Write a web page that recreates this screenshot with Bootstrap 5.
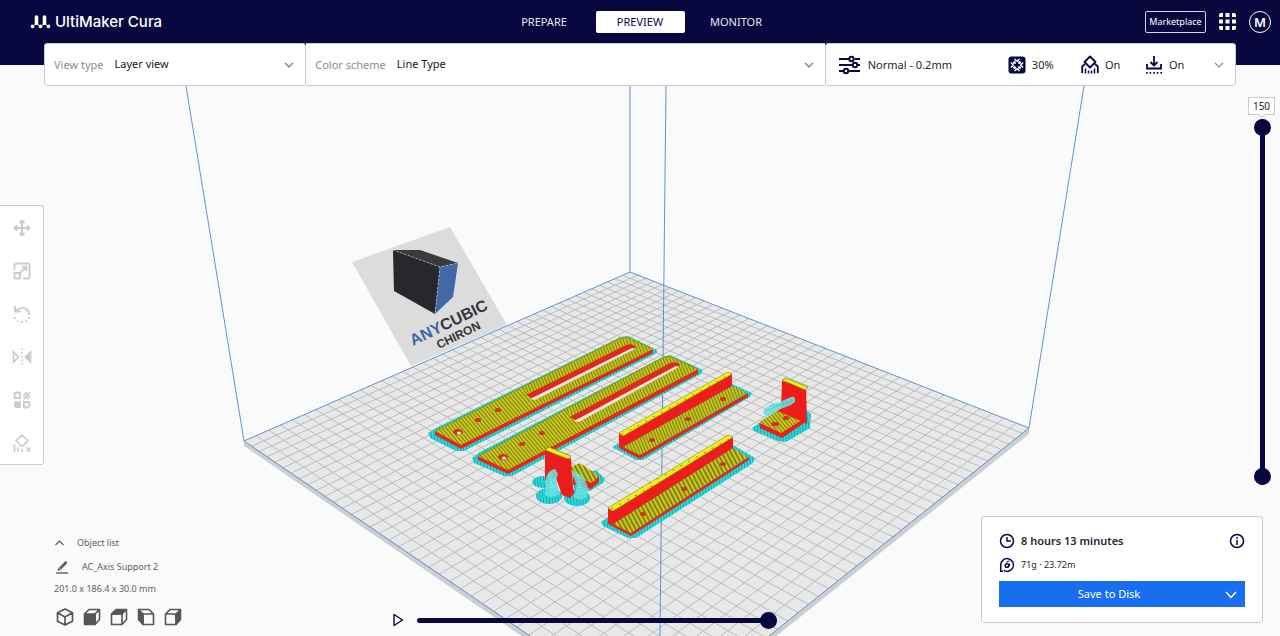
<!DOCTYPE html>
<html lang="en">
<head>
<meta charset="utf-8">
<meta name="viewport" content="width=device-width, initial-scale=1">
<title>UltiMaker Cura</title>
<link href="https://cdn.jsdelivr.net/npm/bootstrap@5.3.0/dist/css/bootstrap.min.css" rel="stylesheet">
<style>
  :root { --navy: #08073f; --edge: #c9cacc; --muted-ink: #8a8b90; --action: #196ef0; }
  body { font-family: "Noto Sans", "Open Sans", sans-serif; font-size: 11px; line-height: 16px; color: #26262e; background: #fafafa; }
  button { font-family: inherit; }
  .scene { inset: 0; z-index: 0; }
  .layer { z-index: 1; }
  .topbar { background: var(--navy); height: 65px; }
  .topbar-row { height: 43px; }
  .side { flex: 1 1 0; }
  .brand { margin-left: 30px; padding-top: 2px; gap: 4px; color: #fff; font: 500 15px/20px Inter, sans-serif; text-decoration: none; }
  .stage-tabs { gap: 7px; }
  .stage-tabs .nav-link { width: 89px; height: 22px; padding: 0; border-radius: 2px; color: #e6e6f2; font-size: 11px; line-height: 22px; text-align: center; }
  .stage-tabs .nav-link.active { background: #fff; color: var(--navy); }
  .tools-end { gap: 13px; }
  .tools-end > :last-child { margin-right: 9px; }
  .market { height: 22px; width: 61px; padding: 0; border: 1px solid #d5d5e6; border-radius: 2px; color: #fff; font-size: 9px; line-height: 20px; }
  .plain { background: none; border: 0; padding: 0; color: inherit; }
  .avatar { width: 22px; height: 22px; border: 1px solid #fff; border-radius: 50%; color: #fff; font-size: 13px; font-weight: 600; line-height: 20px; }
  .setup { margin: -22px 44px 0; }
  .panel { background: #fff; border: 1px solid var(--edge); border-radius: 3px; }
  .setup .panel { height: 43px; }
  .seg-view { width: 22%; }
  .seg-scheme { width: 43.5%; border-left: 0 !important; border-right: 0 !important; }
  .seg-print { flex: 1 1 0; }
  .seg-view, .seg-scheme { padding-left: 9px; }
  .seg-view label, .seg-scheme label { color: var(--muted-ink); white-space: nowrap; }
  .pick { border: 0; background-color: transparent; font-size: 11px; height: 41px; padding: 0 30px 0 11px; color: #14141e;
    background-position: right 11px center; background-size: 10px 10px;
    background-image: url("data:image/svg+xml,%3Csvg xmlns='http://www.w3.org/2000/svg' viewBox='0 0 10 10'%3E%3Cpath d='M1 3l4 4 4-4' fill='none' stroke='%23777' stroke-width='1.1'/%3E%3C/svg%3E"); }
  .seg-print { padding: 0 11px 0 12px; color: #26262e; text-align: left; }
  .seg-print svg { color: var(--navy); }
  .seg-print .chev { color: #888; }
  .w-profile { flex: 170 1 0; gap: 7px; }
  .w-infill { flex: 73 1 0; gap: 6px; }
  .w-support { flex: 64 1 0; gap: 6px; }
  .w-adhesion { flex: 69 1 0; gap: 6px; }
  .toolbox { width: 44px; margin-top: 119px; border-left: 0; border-radius: 0 3px 3px 0; color: #cbccd0; }
  .toolbox button { height: 43px; }
  .layers { margin: 11px 5px 0 0; }
  .layer-no { width: 27px; height: 18px; border: 1px solid var(--edge); background: #fff; font-size: 10px; line-height: 16px; text-align: center; }
  .layer-no::after { content: ""; display: block; width: 5px; height: 5px; margin: -2px auto 0; background: #fff; border: solid var(--edge); border-width: 0 1px 1px 0; transform: rotate(45deg); }
  .layer-track { width: 18px; height: 366px; margin-top: 4px; }
  .knob { appearance: none; -webkit-appearance: none; background: none; height: 18px; margin: 0; }
  .knob::-webkit-slider-runnable-track { height: 5px; border-radius: 3px; background: var(--navy); }
  .knob::-webkit-slider-thumb { -webkit-appearance: none; width: 17px; height: 17px; margin-top: -6px; border-radius: 50%; background: var(--navy); }
  .layer-track .knob { position: absolute; left: 0; top: 0; width: 366px; transform-origin: 0 0; transform: rotate(-90deg) translateX(-100%); }
  .layer-track .low { pointer-events: none; }
  .layer-track .low::-webkit-slider-runnable-track { background: none; }
  .layer-track .low::-webkit-slider-thumb { pointer-events: auto; }
  .objects { width: 187px; padding: 0 0 10px 54px; font-size: 9px; color: #5c5d61; }
  .objects .line-a, .objects .line-b { gap: 12px; height: 24px; }
  .objects .line-c { line-height: 20px; }
  .views { gap: 9px; margin: 9px 0 0 2px; color: #55565a; }
  .playback { width: 385px; gap: 12px; padding-bottom: 7px; color: var(--navy); }
  .result { width: 282px; margin: 0 17px 13px 0; padding: 12px 17px 15px; font-size: 9px; }
  .result .entry { height: 24px; gap: 6px; }
  .result svg { color: var(--navy); }
  .result .time { font-size: 11px; }
  .save-row { margin-top: 4px; }
  .save-row .btn { --bs-btn-bg: var(--action); --bs-btn-border-width: 0; --bs-btn-border-radius: 0; height: 26px; padding: 0; font-size: 11px; color: #fff; }
  .save-row .main-action { padding-left: 2px; }
  .save-row .more { width: 28px; flex: none; }
  .save-row .more svg { color: #fff; }
</style>
</head>
<body>
<div class="position-relative min-vh-100 d-flex flex-column overflow-hidden">

  <svg class="scene position-absolute w-100 h-100" viewBox="0 0 1280 636" preserveAspectRatio="xMidYMin slice" role="img" aria-label="Build plate with sliced models">
    <defs>
      <pattern id="skin" width="3" height="3" patternUnits="userSpaceOnUse" patternTransform="rotate(-40)"><rect width="3" height="3" fill="#cdca1c"/><rect width="1.100" height="3" fill="#7d8114"/></pattern>
      <pattern id="skinBack" width="3" height="3" patternUnits="userSpaceOnUse" patternTransform="rotate(-22)"><rect width="3" height="3" fill="#c6c71c"/><rect width="1.100" height="3" fill="#7d8212"/></pattern>
      <pattern id="skinWide" width="4" height="4" patternUnits="userSpaceOnUse" patternTransform="rotate(-28)"><rect width="4" height="4" fill="#cfc81c"/><rect width="1.600" height="4" fill="#707512"/></pattern>
      <pattern id="brim" width="3" height="4" patternUnits="userSpaceOnUse" patternTransform="rotate(-8)"><rect width="3" height="4" fill="#25dcdc"/><rect width="1" height="4" fill="#1ba5aa"/></pattern>
      <pattern id="ridge" width="9" height="4" patternUnits="userSpaceOnUse" patternTransform="rotate(-29)"><rect width="9" height="4" fill="#eef01c"/><rect width="2" height="1" y="1" fill="#8a8e12"/></pattern>
    </defs>
    <path d="M352 262L450 227 507 325 411 366z" fill="#dcdcdc"/>
    <path d="M393 250L440 267 435 314 394 291z" fill="#2a262d"/>
    <path d="M393 250L420 250 458 263 440 267z" fill="#3b3a3d"/>
    <path d="M440 267L458 263 453 297 435 314z" fill="#4268a8"/>
    <path d="M393 250L440 267 458 263M440 267L435 314" fill="none" stroke="#ddd" stroke-width=".6" stroke-dasharray="2 2"/>
    <g font-family="Liberation Sans, sans-serif" font-weight="700">
      <text transform="translate(413 346) rotate(-26)" font-size="16" fill="#37363a"><tspan fill="#3f65a2">ANY</tspan>CUBIC</text>
      <text transform="translate(439 349) rotate(-26)" font-size="12" fill="#37363a">CHIRON</text>
    </g>
    <path d="M244 441V446L659 730 1029 434V428L660 700z" fill="#cdced4"/>
    <path d="M630 272L1029 428 659.500 724 244 441z" fill="#e8e8e8"/>
    <path id="grid" fill="none" stroke="#bcbcbe"/>
    <path d="M186 86L244 441M630 86V272M666 86L660 636M1084 86L1029 428M630 272L1029 428 659 724 244 441z" fill="none" stroke="#5387cb" stroke-width=".9"/>

    <!-- long slotted arms -->
    <g>
      <path d="M428 433L436 428 621 337 628 336 657 350 657 353 464 451 456 451 430 438z" fill="url(#brim)"/>
      <path d="M435 431L461 444 653 348V353L461 449 435 435z" fill="#e0281c"/>
      <path d="M435 431L620 338 627 337 653 349 461 445z" fill="url(#skin)"/>
      <path d="M520 388L620 338 627 337 653 349 545 403z" fill="url(#skinBack)"/>
      <path d="M435 431L620 338 627 337 653 349" fill="none" stroke="#7c9a1c"/>
      <path d="M526 395L626 345Q633 343 636 347L534 399z" fill="#e0281c"/>
      <path d="M530 399L632 348 635 349 535 400z" fill="#f3e6e2"/>
      <g fill="#d8301c"><ellipse cx="458" cy="432" rx="5" ry="3"/><ellipse cx="478" cy="420" rx="3" ry="2"/><ellipse cx="498" cy="410" rx="3" ry="2"/></g>
      <ellipse cx="459" cy="433" rx="2" ry="1.500" fill="#eee"/>
    </g>
    <g>
      <path d="M472 458L480 452 663 357 670 355 703 370 701 374 512 476 504 476 474 463z" fill="url(#brim)"/>
      <path d="M478 456L508 469 698 369V374L508 474 478 460z" fill="#e0281c"/>
      <path d="M478 456L662 358 669 356 698 369 508 470z" fill="url(#skin)"/>
      <path d="M563 410L662 358 669 356 698 369 592 425z" fill="url(#skinBack)"/>
      <path d="M478 456L662 358 669 356 698 369" fill="none" stroke="#7c9a1c"/>
      <path d="M570 417L670 363Q678 361 680 365L577 421z" fill="#e0281c"/>
      <path d="M574 421L676 366 679 367 579 422z" fill="#f3e6e2"/>
      <g fill="#d8301c"><ellipse cx="503" cy="457" rx="5" ry="3"/><ellipse cx="522" cy="444" rx="3" ry="2"/><ellipse cx="542" cy="433" rx="3" ry="2"/></g>
      <ellipse cx="504" cy="458" rx="2" ry="1.500" fill="#eee"/>
    </g>

    <!-- angle brackets -->
    <path d="M612 447L619 443 732 384 752 393 750 397 643 460 636 460z" fill="url(#brim)"/>
    <path d="M619 444L640 455 748 393V397L640 459 619 448z" fill="#e0281c"/>
    <path d="M623 447L732 386 747 393 640 455z" fill="url(#skinBack)"/>
    <path d="M619 433L732 374V386L623 447 619 445z" fill="#ee1c1a"/>
    <path d="M619 433L728 372 732 374 623 436z" fill="url(#ridge)" stroke="#94a416" stroke-width=".7"/>
    <g fill="#d0301c"><ellipse cx="652" cy="440" rx="3" ry="2"/><ellipse cx="688" cy="419" rx="3" ry="2"/><ellipse cx="723" cy="399" rx="3" ry="2"/></g>

    <path d="M601 522L608 517 733 445 755 458 753 463 636 538 628 538 603 526z" fill="url(#brim)"/>
    <path d="M608 519L631 532 749 457V460L631 536 608 524z" fill="#e0281c"/>
    <path d="M613 524L733 448 748 457 631 533z" fill="url(#skinWide)"/>
    <path d="M608 508L733 437V448L613 524 608 521z" fill="#ee1c1a"/>
    <path d="M608 508L728 435 733 437 613 511z" fill="url(#ridge)" stroke="#94a416" stroke-width=".7"/>
    <g fill="#d0301c"><ellipse cx="643" cy="514" rx="3" ry="2"/><ellipse cx="684" cy="489" rx="3" ry="2"/><ellipse cx="723" cy="464" rx="3" ry="2"/></g>

    <!-- corner bracket, right -->
    <path d="M752 428L761 422 806 410 811 414 810 428 786 442 778 441 754 431z" fill="url(#brim)"/>
    <path d="M759 423L781 432 804 416V423L782 438 760 428z" fill="#ee1c1a"/>
    <path d="M759 422L777 411 802 420 781 433z" fill="url(#skin)"/>
    <path d="M782 381L806 388 807 424 801 421 777 411 781 408z" fill="#ee1c1a"/>
    <path d="M782 380L786 378 808 387 805 390z" fill="#eef01c" stroke="#6f7a14" stroke-width=".7"/>
    <path d="M763 412Q765 405 780 402L791 397Q796 396 795 402L791 405 778 410 769 416Q763 415 763 412z" fill="#6fdfe0" opacity=".9"/>
    <path d="M765 411L794 400M770 406L790 403" fill="none" stroke="#30b9bd" stroke-width=".7" stroke-dasharray="2 1"/>
    <g fill="#d0301c"><ellipse cx="775" cy="424" rx="4" ry="2"/><ellipse cx="786" cy="418" rx="3" ry="2"/></g>

    <!-- corner bracket, front -->
    <path d="M570 478L596 470 605 479 603 483 590 491 575 490z" fill="url(#brim)"/>
    <g fill="url(#brim)"><ellipse cx="543" cy="482" rx="11" ry="6"/><ellipse cx="549" cy="496" rx="13" ry="8"/><ellipse cx="577" cy="498" rx="13" ry="8"/></g>
    <path d="M573 475L592 482 599 476V482L591 489 573 484z" fill="#ee1c1a"/>
    <path d="M571 467L580 463 599 476 592 483 571 476z" fill="url(#skinWide)"/>
    <path d="M545 450L568 459 571 458 573 488 575 492 570 498 562 495 556 478 545 480z" fill="#ee1c1a"/>
    <path d="M545 450L549 447 571 456 568 459z" fill="#eef01c" stroke="#6f7a14" stroke-width=".7"/>
    <path d="M546 478Q548 470 555 469L558 474 556 480 560 494Q552 500 545 495z" fill="#66dddf" opacity=".92"/>
    <path d="M571 470Q584 473 588 488L587 497Q580 502 573 497L577 487z" fill="#66dddf" opacity=".85"/>
    <path d="M549 476L555 493M551 472V495M577 475L583 495M580 478L578 498M541 480L550 486" fill="none" stroke="#d7fafa" stroke-width=".7" stroke-dasharray="1 2"/>
  </svg>

  <header class="topbar layer">
    <div class="topbar-row d-flex align-items-center">
      <div class="side"><a href="#" class="brand d-inline-flex align-items-center">
        <svg width="21" height="16" viewBox="0 0 21 16" fill="none" stroke="#fff" stroke-linecap="round" aria-hidden="true"><path d="M6.500 3v6.500M14.500 3v6.500" stroke-width="3.600"/><path d="M6.500 9.500L10.500 12.500 14.500 9.500 18.500 12.500M6.500 9.500L2.500 12.500" stroke-width="1"/><path d="M10.500 12.400v.1M2.500 12.400v.1M18.500 12.400v.1" stroke-width="3.600"/></svg>
        <span>UltiMaker Cura</span></a></div>
      <nav class="nav stage-tabs" aria-label="Stages">
        <a class="nav-link" href="#">PREPARE</a>
        <a class="nav-link active" aria-current="page" href="#">PREVIEW</a>
        <a class="nav-link" href="#">MONITOR</a>
      </nav>
      <div class="side tools-end d-flex justify-content-end align-items-center">
        <button type="button" class="btn market">Marketplace</button>
        <button type="button" class="plain d-flex" aria-label="Applications"><svg width="17" height="17" viewBox="0 0 17 17" fill="#fff"><path d="M2 0h2v4H0V2q0-2 2-2M6.500 0h4v4h-4zM13 0h2q2 0 2 2v2h-4zM0 6.500h4v4H0zM6.500 6.500h4v4h-4zM13 6.500h4v4h-4zM0 13h4v4H2q-2 0-2-2zM6.500 13h4v4h-4zM13 13h4v2q0 2-2 2h-2z"/></svg></button>
        <button type="button" class="plain avatar" aria-label="Account">M</button>
      </div>
    </div>
  </header>

  <section class="setup layer d-flex">
    <div class="panel seg-view d-flex align-items-center"><label for="view">View type</label><select id="view" class="form-select pick"><option>Layer view</option></select></div>
    <div class="panel seg-scheme d-flex align-items-center rounded-0"><label for="scheme">Color scheme</label><select id="scheme" class="form-select pick"><option>Line Type</option></select></div>
    <button type="button" class="panel seg-print d-flex align-items-center">
      <span class="w-profile d-flex align-items-center"><svg width="23" height="20" viewBox="0 0 23 20" fill="none" stroke="currentColor" stroke-width="2"><path d="M1 4h10M17 4h5M1 10h13M20 10h2M1 16h4M11 16h11"/><circle cx="13.500" cy="4" r="2.200"/><circle cx="17" cy="10" r="2.200"/><circle cx="8" cy="16" r="2.200"/></svg>Normal - 0.2mm</span>
      <span class="w-infill d-flex align-items-center"><svg width="18" height="18" viewBox="0 0 18 18"><rect x=".5" y=".5" width="17" height="17" rx="3" fill="currentColor"/><g fill="none" stroke="#fff" stroke-width="1.500"><path d="M6.500 3L9 5.200 11.500 3M6.500 15L9 12.800 11.500 15M3 6.500L5.200 9 3 11.500M15 6.500L12.800 9 15 11.500"/></g><g fill="#fff"><circle cx="6.500" cy="6.500" r="1.500"/><circle cx="11.500" cy="6.500" r="1.500"/><circle cx="6.500" cy="11.500" r="1.500"/><circle cx="11.500" cy="11.500" r="1.500"/></g></svg>30%</span>
      <span class="w-support d-flex align-items-center"><svg width="18" height="19" viewBox="0 0 18 19" fill="none" stroke="currentColor" stroke-width="1.800"><path d="M9 1.500l5.500 5.500L9 12.500 3.500 7z" stroke-linejoin="round"/><path d="M1.200 18v-6.500L4 9M16.800 18v-6.500L14 9"/><path d="M4.500 13.500v5M7.500 15.500v3M10.500 15.500v3M13.500 13.500v5" stroke-width="1.500"/></svg>On</span>
      <span class="w-adhesion d-flex align-items-center"><svg width="18" height="18" viewBox="0 0 18 18" fill="none" stroke="currentColor" stroke-width="1.800"><path d="M9 0v9M5.500 6L9 9.500 12.500 6M2 8v4.500h14V8"/><path d="M1 16.800h16" stroke-dasharray="1.600 2"/></svg>On</span>
      <svg class="chev" width="10" height="10" viewBox="0 0 10 10" fill="none" stroke="currentColor" stroke-width="1.100"><path d="M1 3l4 4 4-4"/></svg>
    </button>
  </section>

  <main class="layer flex-grow-1 d-flex justify-content-between align-items-start">
    <div class="panel toolbox d-flex flex-column" role="toolbar" aria-label="Tools">
      <button type="button" class="plain" aria-label="Move"><svg width="18" height="18" viewBox="0 0 18 18" fill="none" stroke="currentColor" stroke-width="2"><path d="M9 1.500v15M1.500 9h15M6.500 4L9 1.500 11.500 4M6.500 14L9 16.500l2.500-2.500M4 6.500L1.500 9 4 11.500M14 6.500L16.500 9 14 11.500"/></svg></button>
      <button type="button" class="plain" aria-label="Scale"><svg width="18" height="18" viewBox="0 0 18 18" fill="none" stroke="currentColor" stroke-width="1.900"><path d="M1.500 8V3q0-1.500 1.500-1.500h12q1.500 0 1.500 1.500v12q0 1.500-1.500 1.500h-5M1.500 11h5.500v5.500H3q-1.500 0-1.500-1.500zM7.500 10.500L13 5M9 4.800h4.300V9"/></svg></button>
      <button type="button" class="plain" aria-label="Rotate"><svg width="18" height="18" viewBox="0 0 18 18" fill="none" stroke="currentColor" stroke-width="1.900"><path d="M2 1v5.500h6M2.500 6Q8 1 13 4q3 2 3.500 6"/><path d="M16.300 12q-2 5-7.300 5-7.500 0-7.800-8" stroke-dasharray="1.700 2.600"/></svg></button>
      <button type="button" class="plain" aria-label="Mirror"><svg width="20" height="18" viewBox="0 0 20 18" fill="none" stroke="currentColor" stroke-width="1.700"><path d="M1.500 4l5 5-5 5z"/><path d="M18.500 4l-5 5 5 5z" fill="currentColor"/><path d="M10 0v18" stroke-dasharray="1.600 2.200"/></svg></button>
      <button type="button" class="plain" aria-label="Per model settings"><svg width="18" height="18" viewBox="0 0 18 18" fill="none" stroke="currentColor" stroke-width="1.800"><path d="M7 1.500V7H1.500V4q0-2.500 2.500-2.500zM11 11h5.500v3q0 2.500-2.500 2.500h-3z"/><path d="M1 10.200h6.800V17H4q-3 0-3-3z" fill="currentColor" stroke="none"/><path d="M10.500 4.500l3.500-3.500M10.500 8l6.500-6.500M14 8l3-3"/></svg></button>
      <button type="button" class="plain" aria-label="Support blocker"><svg width="18" height="18" viewBox="0 0 18 18" fill="none" stroke="currentColor" stroke-width="1.700"><path d="M9 1l6 5.800L9 12.500 3 6.800z" stroke-linejoin="round"/><path d="M1.500 10v8M4.800 13.500V18M9 15.500V18M13.500 13.500l4 4M17.500 13.500l-4 4"/></svg></button>
    </div>
    <div class="layers d-flex flex-column align-items-center">
      <output class="layer-no" for="top-layer">150</output>
      <div class="layer-track position-relative">
        <input id="top-layer" class="knob" type="range" min="1" max="150" value="150" aria-label="Top layer">
        <input class="knob low" type="range" min="1" max="150" value="1" aria-label="Bottom layer">
      </div>
    </div>
  </main>

  <footer class="layer d-flex align-items-end">
    <div class="objects">
      <button type="button" class="plain line-a d-flex align-items-center"><svg width="11" height="10" viewBox="0 0 11 10" fill="none" stroke="currentColor" stroke-width="1.200"><path d="M1.500 7l4-4 4 4"/></svg>Object list</button>
      <div class="line-b d-flex align-items-center"><button type="button" class="plain d-flex" aria-label="Rename"><svg width="16" height="14" viewBox="0 0 16 14" fill="none" stroke="currentColor"><path d="M2 13h12" stroke-width="1.400"/><path d="M6 8.500L12.500 2" stroke-width="2.600"/><path d="M3.500 11l1-3.500 2.500 2.500z" fill="currentColor" stroke="none"/></svg></button>AC_Axis Support 2</div>
      <div class="line-c text-nowrap">201.0 x 186.4 x 30.0 mm</div>
      <div class="views d-flex">
        <button type="button" class="plain d-flex" aria-label="3D view"><svg width="18" height="18" viewBox="0 0 18 18" fill="none" stroke="currentColor" stroke-width="1.700" stroke-linejoin="round"><path d="M9 1l7.500 3.800v8.400L9 17l-7.500-3.800V4.800zM1.500 4.800L9 9l7.500-4.200M9 9v8"/></svg></button>
        <button type="button" class="plain d-flex" aria-label="Front view"><svg width="18" height="18" viewBox="0 0 18 18" fill="none" stroke="currentColor" stroke-width="1.600" stroke-linejoin="round"><path d="M1.500 6h10.500v10.500H1.500z" fill="currentColor"/><path d="M1.500 6L6 1.500h10.500v10L12 16.500V6l4.500-4.500"/></svg></button>
        <button type="button" class="plain d-flex" aria-label="Top view"><svg width="18" height="18" viewBox="0 0 18 18" fill="none" stroke="currentColor" stroke-width="1.600" stroke-linejoin="round"><path d="M1.500 6L6 1.500h10.500L12 6z" fill="currentColor"/><path d="M1.500 6h10.500v10.500H1.500zM12 16.500l4.500-5v-10"/></svg></button>
        <button type="button" class="plain d-flex" aria-label="Left view"><svg width="18" height="18" viewBox="0 0 18 18" fill="none" stroke="currentColor" stroke-width="1.600" stroke-linejoin="round"><path d="M1.500 1.500L6 6v10.500l-4.500-5z" fill="currentColor"/><path d="M6 6h10.500v10.500H6zM1.500 1.500H12L16.500 6"/></svg></button>
        <button type="button" class="plain d-flex" aria-label="Right view"><svg width="18" height="18" viewBox="0 0 18 18" fill="none" stroke="currentColor" stroke-width="1.600" stroke-linejoin="round"><path d="M16.500 1.500L12 6v10.500l4.500-5z" fill="currentColor"/><path d="M1.500 6h10.500v10.500H1.500zM1.500 6L6 1.500h10.500"/></svg></button>
      </div>
    </div>
    <div class="playback d-flex align-items-center mx-auto">
      <button type="button" class="plain d-flex" aria-label="Play"><svg width="13" height="14" viewBox="0 0 13 14" fill="none" stroke="currentColor" stroke-width="1.400" stroke-linejoin="round"><path d="M2 1.500l8.500 5.500L2 12.500z"/></svg></button>
      <input class="knob flex-grow-1" type="range" min="0" max="100" value="100" aria-label="Path position">
    </div>
    <div class="panel result">
      <div class="entry d-flex align-items-center"><svg width="16" height="16" viewBox="0 0 16 16" fill="none" stroke="currentColor" stroke-width="1.500"><circle cx="8" cy="8" r="6.500"/><path d="M8 4v4h4"/></svg><strong class="time fw-semibold">8 hours 13 minutes</strong>
        <button type="button" class="plain d-flex ms-auto" aria-label="Details"><svg width="16" height="16" viewBox="0 0 16 16" fill="none" stroke="currentColor" stroke-width="1.500"><circle cx="8" cy="8" r="6.500"/><path d="M8 7v5M8 4v1.700"/></svg></button></div>
      <div class="entry d-flex align-items-center"><svg width="16" height="16" viewBox="0 0 16 16" fill="none" stroke="currentColor" stroke-width="1.500"><path d="M1.700 15V8a6.400 6.400 0 1 1 3 5.400M1 14.300h3"/><circle cx="8" cy="8.500" r="1.800"/><path d="M7.500 5.500q1-1.500 3-1.500M10.500 9V6.500" stroke-width="1.200"/></svg>71g · 23.72m</div>
      <div class="save-row d-flex"><button type="button" class="btn btn-primary flex-grow-1 main-action">Save to Disk</button><button type="button" class="btn btn-primary more" aria-label="More save options"><svg width="14" height="10" viewBox="0 0 14 10" fill="none" stroke="currentColor" stroke-width="1.500"><path d="M2 2l5 5.500L12 2"/></svg></button></div>
    </div>
  </footer>
</div>

<script src="https://cdn.jsdelivr.net/npm/bootstrap@5.3.0/dist/js/bootstrap.bundle.min.js"></script>
<script>
  // Projects the 400 mm plate onto its four screen corners and rules it every 10 mm.
  const [p0, p1, p2, p3] = [[630, 272], [1029, 428], [659.5, 724], [244, 441]];
  const dx1 = p1[0] - p2[0], dx2 = p3[0] - p2[0], sx = p0[0] - p1[0] + p2[0] - p3[0];
  const dy1 = p1[1] - p2[1], dy2 = p3[1] - p2[1], sy = p0[1] - p1[1] + p2[1] - p3[1];
  const det = dx1 * dy2 - dx2 * dy1;
  const g = (sx * dy2 - dx2 * sy) / det, h = (dx1 * sy - sx * dy1) / det;
  const project = (u, v) => {
    const w = g * u + h * v + 1;
    const x = (p1[0] - p0[0] + g * p1[0]) * u + (p3[0] - p0[0] + h * p3[0]) * v + p0[0];
    const y = (p1[1] - p0[1] + g * p1[1]) * u + (p3[1] - p0[1] + h * p3[1]) * v + p0[1];
    return (x / w).toFixed(1) + ' ' + (y / w).toFixed(1);
  };
  let d = '';
  for (let i = 1; i < 40; i++) {
    const t = i / 40;
    d += `M${project(t, 0)}L${project(t, 1)}M${project(0, t)}L${project(1, t)}`;
  }
  document.getElementById('grid').setAttribute('d', d);
</script>
</body>
</html>
